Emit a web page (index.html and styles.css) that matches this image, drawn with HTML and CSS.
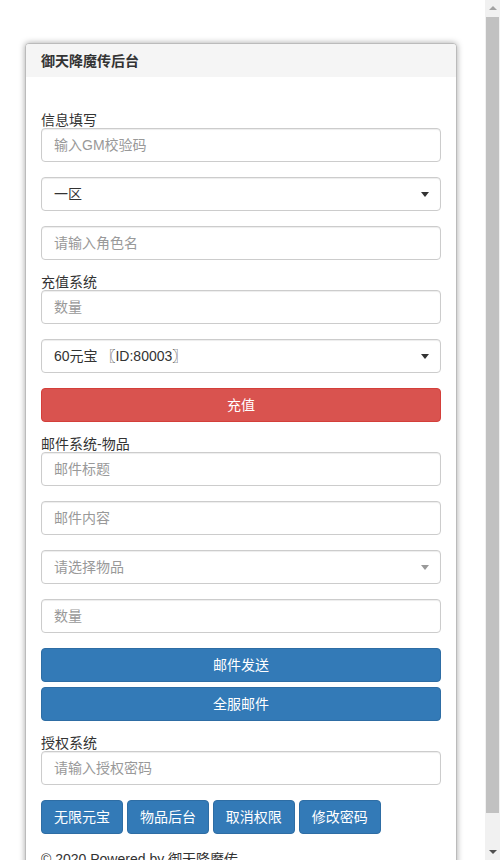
FILE: index.html
```html
<!DOCTYPE html>
<html lang="zh-CN">
  <head>
    <meta charset="UTF-8" />
    <meta name="viewport" content="width=device-width, initial-scale=1.0" />
    <title>御天降魔传后台</title>
    <link rel="stylesheet" href="styles.css">
  </head>
  <body>
    <div class="panel">
      <div class="panel-heading">御天降魔传后台</div>
      <div class="panel-body">
        <label class="group-title">信息填写</label>
        <div class="form-group">
          <input type="text" class="form-control" placeholder="输入GM校验码" />
        </div>
        <div class="form-group select-wrap">
          <select class="form-control">
            <option>一区</option>
            <option>二区</option>
          </select>
        </div>
        <div class="form-group">
          <input type="text" class="form-control" placeholder="请输入角色名" />
        </div>

        <label class="group-title">充值系统</label>
        <div class="form-group">
          <input type="text" class="form-control" placeholder="数量" />
        </div>
        <div class="form-group select-wrap">
          <select class="form-control">
            <option>60元宝 〖ID:80003〗</option>
          </select>
        </div>
        <div class="form-group">
          <button type="button" class="btn btn-danger btn-block">充值</button>
        </div>

        <label class="group-title">邮件系统-物品</label>
        <div class="form-group">
          <input type="text" class="form-control" placeholder="邮件标题" />
        </div>
        <div class="form-group">
          <input type="text" class="form-control" placeholder="邮件内容" />
        </div>
        <div class="form-group select-wrap muted">
          <select class="form-control">
            <option>请选择物品</option>
          </select>
        </div>
        <div class="form-group">
          <input type="text" class="form-control" placeholder="数量" />
        </div>
        <div class="form-group">
          <button type="button" class="btn btn-primary btn-block">邮件发送</button>
          <button type="button" class="btn btn-primary btn-block">全服邮件</button>
        </div>

        <label class="group-title">授权系统</label>
        <div class="form-group">
          <input type="password" class="form-control" placeholder="请输入授权密码" />
        </div>
        <div class="form-group btn-row">
          <button type="button" class="btn btn-primary">无限元宝</button>
          <button type="button" class="btn btn-primary">物品后台</button>
          <button type="button" class="btn btn-primary">取消权限</button>
          <button type="button" class="btn btn-primary">修改密码</button>
        </div>

        <p class="footer">© 2020 Powered by 御天降魔传</p>
      </div>
    </div>

    <!-- window scrollbar -->
    <div class="scrollbar">
      <span class="arrow up"></span>
      <span class="thumb"></span>
      <span class="arrow down"></span>
    </div>
  </body>
</html>
```

FILE: styles.css
```css
body {
  font-family: "Liberation Sans", Arial, "Noto Sans CJK SC", sans-serif;
  font-size: 14px;
  color: #333;
  margin: 0 15px 0 0;
  padding: 43px 0 20px;
  background-color: #fff;
}
.panel {
  width: 430px;
  margin: 0 0 0 25px;
  border: 1px solid #bbb;
  border-radius: 4px;
  box-shadow: 0 0 6px rgba(0, 0, 0, 0.35);
  background-color: #fff;
}
.panel-heading {
  background-color: #f5f5f5;
  padding: 7px 15px 6px;
  line-height: 20px;
  font-weight: bold;
  border-radius: 3px 3px 0 0;
}
.panel-body {
  padding: 36px 15px 15px;
}
.group-title {
  display: block;
  line-height: 15px;
  height: 15px;
}
.form-group {
  margin-bottom: 15px;
}
.form-control {
  display: block;
  width: 100%;
  height: 34px;
  padding: 6px 12px;
  font-family: inherit;
  font-size: 14px;
  color: #333;
  background-color: #fff;
  border: 1px solid #ccc;
  border-radius: 4px;
  box-sizing: border-box;
  box-shadow: inset 0 1px 1px rgba(0, 0, 0, 0.075);
}
.form-control::placeholder {
  color: #999;
}
select.form-control {
  appearance: none;
  -webkit-appearance: none;
  padding: 6px 12px;
}
.select-wrap {
  position: relative;
}
.select-wrap::after {
  content: "";
  position: absolute;
  right: 12px;
  top: 15px;
  border-left: 4px solid transparent;
  border-right: 4px solid transparent;
  border-top: 5px solid #333;
}
.select-wrap.muted select {
  color: #999;
}
.select-wrap.muted::after {
  border-top-color: #999;
}
.btn {
  display: inline-block;
  height: 34px;
  padding: 6px 12px;
  font-family: inherit;
  font-size: 14px;
  line-height: 20px;
  color: #fff;
  border: 1px solid transparent;
  border-radius: 4px;
  box-sizing: border-box;
  cursor: pointer;
}
.btn-block {
  display: block;
  width: 100%;
}
.btn-block + .btn-block {
  margin-top: 5px;
}
.btn-danger {
  background-color: #d9534f;
  border-color: #d43f3a;
}
.btn-primary {
  background-color: #337ab7;
  border-color: #2e6da4;
}
.footer {
  margin: 0;
  line-height: 20px;
}

.scrollbar {
  position: fixed;
  top: 0;
  right: 0;
  bottom: 0;
  width: 15px;
  background-color: #f1f1f1;
}
.scrollbar .thumb {
  position: absolute;
  top: 17px;
  bottom: 47px;
  left: 1px;
  right: 1px;
  background-color: #c1c1c1;
}
.scrollbar .arrow {
  position: absolute;
  left: 4px;
  border-left: 4px solid transparent;
  border-right: 4px solid transparent;
}
.scrollbar .up {
  top: 6px;
  border-bottom: 4px solid #a3a3a3;
}
.scrollbar .down {
  bottom: 6px;
  border-top: 4px solid #505050;
}
```
